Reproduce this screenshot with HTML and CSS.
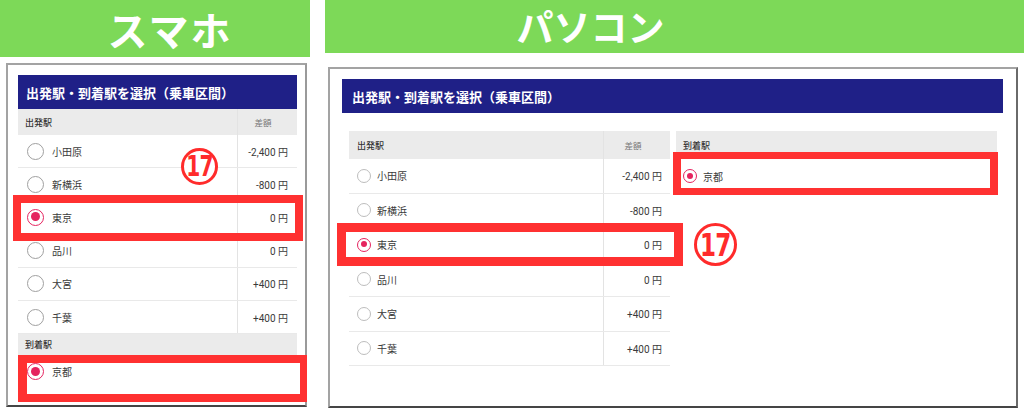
FILE: index.html
```html
<!DOCTYPE html>
<html lang="ja">
<head>
<meta charset="utf-8">
<title>乗車区間の選択</title>
<link rel="stylesheet" href="styles.css">
</head>
<body>
<div class="page">
  <section class="col col-sp">
    <div class="banner">スマホ</div>
    <div class="frame">
      <div class="title">出発駅・到着駅を選択（乗車区間）</div>
      <div class="tbl">
        <div class="thead"><div class="c-name">出発駅</div><div class="c-amt">差額</div></div>
        <div class="row"><div class="c-name"><span class="radio"></span>小田原</div><div class="c-amt">-2,400 円</div></div>
        <div class="row"><div class="c-name"><span class="radio"></span>新横浜</div><div class="c-amt">-800 円</div></div>
        <div class="row sel hl"><div class="c-name"><span class="radio"></span>東京</div><div class="c-amt">0 円</div></div>
        <div class="row"><div class="c-name"><span class="radio"></span>品川</div><div class="c-amt">0 円</div></div>
        <div class="row"><div class="c-name"><span class="radio"></span>大宮</div><div class="c-amt">+400 円</div></div>
        <div class="row"><div class="c-name"><span class="radio"></span>千葉</div><div class="c-amt">+400 円</div></div>
        <div class="thead thead-to"><div class="c-name">到着駅</div></div>
        <div class="row row-to sel hl"><div class="c-name"><span class="radio"></span>京都</div></div>
      </div>
    </div>
  </section>

  <section class="col col-pc">
    <div class="banner">パソコン</div>
    <div class="frame">
      <div class="title">出発駅・到着駅を選択（乗車区間）</div>
      <div class="tables">
        <div class="tbl tbl-from">
          <div class="thead"><div class="c-name">出発駅</div><div class="c-amt">差額</div></div>
          <div class="row"><div class="c-name"><span class="radio"></span>小田原</div><div class="c-amt">-2,400 円</div></div>
          <div class="row"><div class="c-name"><span class="radio"></span>新横浜</div><div class="c-amt">-800 円</div></div>
          <div class="row sel hl"><div class="c-name"><span class="radio"></span>東京</div><div class="c-amt">0 円</div></div>
          <div class="row"><div class="c-name"><span class="radio"></span>品川</div><div class="c-amt">0 円</div></div>
          <div class="row"><div class="c-name"><span class="radio"></span>大宮</div><div class="c-amt">+400 円</div></div>
          <div class="row"><div class="c-name"><span class="radio"></span>千葉</div><div class="c-amt">+400 円</div></div>
        </div>
        <div class="tbl tbl-to">
          <div class="thead"><div class="c-name">到着駅</div></div>
          <div class="row row-to sel hl"><div class="c-name"><span class="radio"></span>京都</div></div>
        </div>
      </div>
    </div>
  </section>

  <div class="badge badge-sp"><span class="badge-num">17</span></div>
  <div class="badge badge-pc"><span class="badge-num">17</span></div>
</div>
</body>
</html>
```

FILE: styles.css
```css
* { box-sizing: border-box; }

html, body {
  margin: 0;
  padding: 0;
  background: #ffffff;
}

body {
  width: 1024px;
  height: 420px;
  overflow: hidden;
  font-family: Roboto, "Noto Sans CJK JP", sans-serif;
  color: #333333;
}

.page {
  position: relative;
  display: flex;
  gap: 15px;
  height: 420px;
}

.col {
  display: flex;
  flex-direction: column;
}

.col-sp { width: 310px; }
.col-pc { flex: 1; }

/* Green banners */
.banner {
  background: #7dd958;
  color: #ffffff;
  font-family: "Noto Sans CJK JP", sans-serif;
  font-weight: 700;
  line-height: 1.2;
  text-align: center;
  display: flex;
  align-items: center;
  justify-content: center;
}

.col-sp .banner {
  height: 57px;
  font-size: 40px;
  padding-left: 30px;
  letter-spacing: 2px;
}

.col-pc .banner {
  height: 53px;
  font-size: 37px;
  padding-right: 168px;
}

/* Frames */
.frame {
  border: 2px solid #a3a3a3;
  border-bottom-color: #454545;
  background: #ffffff;
}

.col-sp .frame {
  margin: 6px 3px 0 6px;
  height: 344px;
  padding: 10px 8px 0 10px;
  border-right-color: #9a9a9a;
}

.col-pc .frame {
  margin: 14px 6px 0 3px;
  height: 341px;
  padding: 10px 13px 0 12px;
  border-right-color: #6a6a6a;
}

.title {
  background: #1f2087;
  color: #ffffff;
  font-family: "Noto Sans CJK JP", sans-serif;
  font-weight: 700;
  font-size: 13px;
  height: 34px;
  display: flex;
  align-items: center;
}

.col-sp .title { padding-left: 8px; }
.col-pc .title { padding-left: 10px; }

/* Tables */
.tables {
  display: flex;
  gap: 6px;
  margin-top: 18px;
  padding: 0 6px 0 7px;
}

.tbl-from, .tbl-to { width: 321px; }

.thead {
  display: flex;
  background: #ebebeb;
  font-family: "Noto Sans CJK JP", sans-serif;
  font-size: 9px;
  font-weight: 500;
  color: #333333;
}

.thead .c-amt {
  font-weight: 400;
  color: #777777;
  font-size: 8.5px;
  justify-content: center;
  padding-right: 0;
}

.row {
  position: relative;
  display: flex;
  border-bottom: 1px solid #e9e9e9;
  font-size: 10px;
  color: #3a3a3a;
}

.c-name {
  flex: 1;
  display: flex;
  align-items: center;
}

.c-amt {
  display: flex;
  align-items: center;
  justify-content: flex-end;
  border-left: 1px solid #e3e3e3;
}

.radio {
  display: inline-block;
  border-radius: 50%;
  border: 1.5px solid #a0a0a0;
  background: #ffffff;
  position: relative;
  flex: none;
}

.sel .radio { border-color: #e5245f; }

.sel .radio::after {
  content: "";
  position: absolute;
  border-radius: 50%;
  background: #e5245f;
}

/* Smartphone sizes */
.col-sp .thead { height: 26px; }
.col-sp .thead .c-name { padding-left: 7px; }
.col-sp .c-amt { width: 60px; padding-right: 9px; }
.col-sp .row { height: 33.2px; }
.col-sp .row .c-name { padding-left: 9px; }
.col-sp .radio { width: 17px; height: 17px; margin-right: 8px; }
.col-sp .sel .radio::after { left: 2.5px; top: 2.5px; width: 9px; height: 9px; }
.col-sp .thead-to { height: 21px; }
.col-sp .row-to { height: 33px; border-bottom: none; }

/* PC sizes */
.col-pc .thead { height: 28px; }
.col-pc .thead .c-name { padding-left: 8px; }
.col-pc .tbl-to .thead .c-name { padding-left: 7px; }
.col-pc .c-amt { width: 67px; padding-right: 8px; }
.col-pc .row { height: 34.5px; }
.col-pc .row .c-name { padding-left: 8px; }
.col-pc .tbl-to .row .c-name { padding-left: 7px; }
.col-pc .radio { width: 14px; height: 14px; margin-right: 6px; border-width: 1px; border-color: #bdbdbd; }
.col-pc .sel .radio { border-color: #e5245f; border-width: 1.5px; }
.col-pc .sel .radio::after { left: 2.5px; top: 2.5px; width: 6px; height: 6px; }
.col-pc .row-to { border-bottom: none; }

/* Red highlight boxes */
.hl { z-index: 1; }
.hl::after {
  content: "";
  position: absolute;
  border: 8px solid #ff3131;
  pointer-events: none;
}

.col-sp .row.hl::after { top: -6px; left: -5px; right: -6px; bottom: -7px; }
.col-sp .row-to.hl::after { top: 0; left: 0; right: -10px; bottom: -14px; border-width: 8px 7px 8px 9px; }
.col-pc .tbl-from .row.hl::after { top: -5px; left: -12px; right: -13px; bottom: -4px; border-width: 9px; }
.col-pc .row-to.hl::after { top: -7px; left: -3px; right: -1px; bottom: -1px; border-width: 7px 8px 7px 8px; }

/* Circled number badges */
.badge {
  position: absolute;
  border-radius: 50%;
  border: 3px solid #ff2b2b;
  background: #ffffff;
  color: #ff2b2b;
  font-family: "DejaVu Sans", "Liberation Sans", sans-serif;
  font-weight: 700;
  line-height: 1;
  display: flex;
  align-items: center;
  justify-content: center;
  z-index: 2;
}

.badge-num {
  display: inline-block;
  transform: scaleX(0.72);
  letter-spacing: -1px;
}

.badge-sp {
  left: 181px;
  top: 148px;
  width: 37px;
  height: 37px;
  font-size: 28px;
}

.badge-pc {
  left: 694px;
  top: 223px;
  width: 43px;
  height: 43px;
  border-width: 3.5px;
  font-size: 32px;
}
```
